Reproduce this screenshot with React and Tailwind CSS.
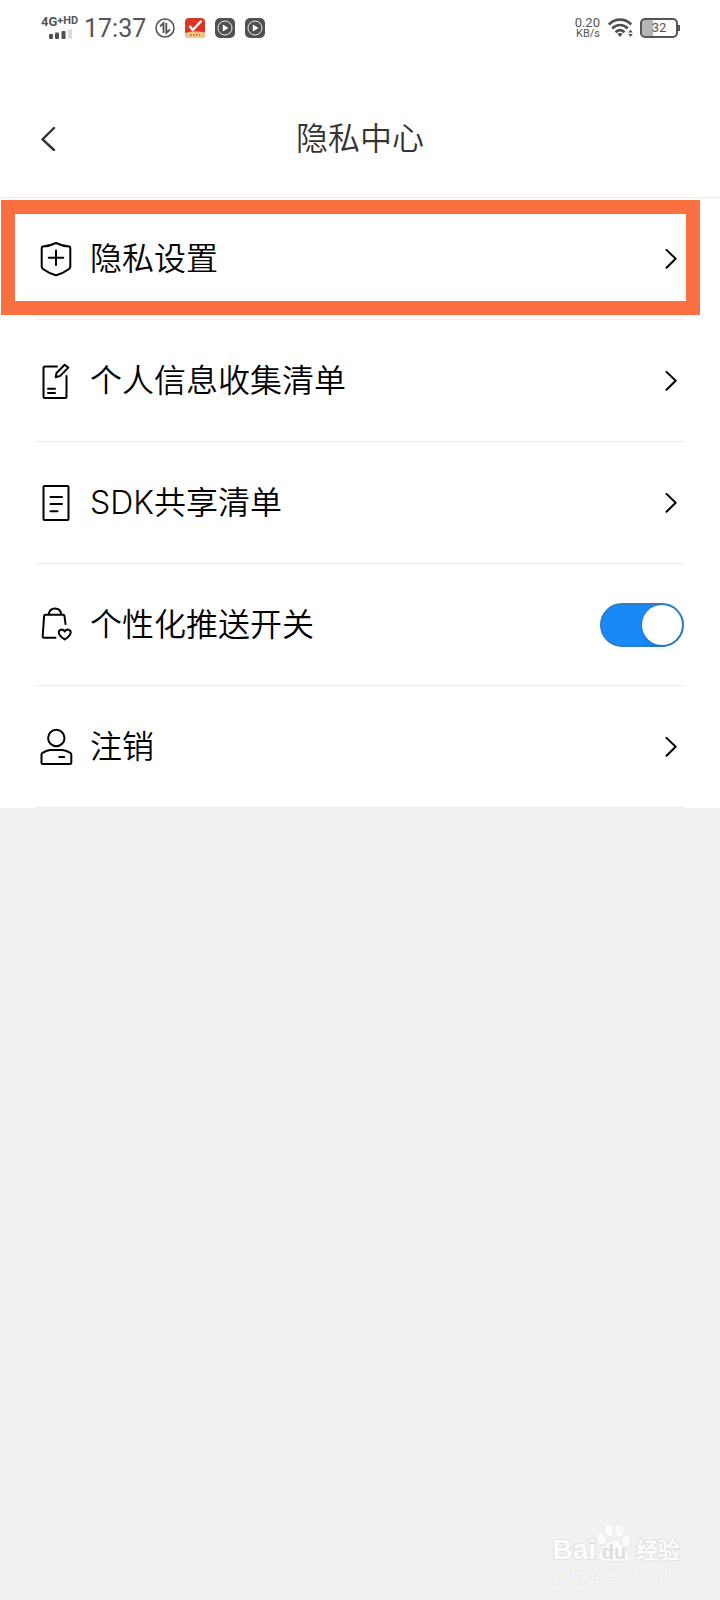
import { useState } from 'react';

const iconProps = {
    viewBox: '0 0 38 38',
    className: 'h-[38px] w-[38px] shrink-0',
    fill: 'none',
    stroke: 'currentColor',
    strokeWidth: 2,
    strokeLinecap: 'round',
    strokeLinejoin: 'round',
    'aria-hidden': true,
};

const ShieldIcon = () => (
    <svg {...iconProps}>
        <path d="M20 3 C15.500 5.200 11 6.300 6.800 6.600 Q5.700 6.700 5.700 8 V26.500 Q5.700 28 7 29 C11 32 15 34 20 35.300 C25 34 29 32 33 29 Q34.300 28 34.300 26.500 V8 Q34.300 6.700 33.200 6.600 C29 6.300 24.500 5.200 20 3 Z" />
        <path d="M12.700 17.700 H27.300 M20 10.500 V25" />
    </svg>
);

const EditIcon = () => (
    <svg {...iconProps}>
        <path d="M21 4.500 H9 Q7.500 4.500 7.500 6 V34.500 Q7.500 36 9 36 H29 Q30.500 36 30.500 34.500 V14" />
        <path d="M19.700 15.300 L20.500 11 L28.700 2.800 L32.300 5.600 L24.200 13.900 Z" />
        <path d="M12 26.700 H19 M12 31 H19" />
    </svg>
);

const ListIcon = () => (
    <svg {...iconProps}>
        <rect x="7.500" y="2" width="25" height="34" rx="1" />
        <path d="M14.500 13 H26 M14.500 20 H26 M14.500 27.200 H21.500" />
    </svg>
);

const BagIcon = () => (
    <svg {...iconProps}>
        <path d="M29.500 18 L28.500 10 Q28.300 8.700 27 8.700 H9.500 Q8.200 8.700 8.100 10 L6.700 30 Q6.700 31.700 8 31.700 H19.500" />
        <path d="M12.800 8 C14 0.800 24 0.800 25.200 8" />
        <path d="M28.700 33.500 C25.500 31.300 22.800 29 22.800 26.500 C22.800 23.400 26.800 22.500 28.700 25.400 C30.600 22.500 34.700 23.400 34.700 26.500 C34.700 29 32 31.300 28.700 33.500 Z" />
    </svg>
);

const UserIcon = () => (
    <svg {...iconProps}>
        <circle cx="20.300" cy="10" r="8.200" />
        <path d="M14 22 H26.500 C29 22.300 32 23.300 34.300 24.800 Q35.300 25.500 35.300 26.500 V34.500 Q35.300 36 33.800 36 H7 Q5.500 36 5.500 34.500 V26.500 Q5.500 25.500 6.500 24.800 C8.800 23.300 11.500 22.300 14 22 Z" />
        <path d="M23.200 29 H28.200" />
    </svg>
);

const Chevron = () => (
    <svg viewBox="0 0 12 20" className="mr-[7px] h-5 w-3 shrink-0" fill="none" stroke="currentColor" strokeWidth="2" strokeLinecap="round" strokeLinejoin="round" aria-hidden="true">
        <path d="M1.500 0.900 L10.700 9.800 L1.500 18.700" />
    </svg>
);

const PlayBadge = () => (
    <svg viewBox="0 0 20 20" className="h-5 w-5" aria-hidden="true">
        <rect width="20" height="20" rx="5" fill="#505050" />
        <circle cx="10" cy="10" r="7" fill="none" stroke="#eee" strokeWidth="1" />
        <path d="M7.800 6.500 L13.500 10 L7.800 13.500 Z" fill="#fff" />
    </svg>
);

const StatusBar = () => (
    <div className="flex h-14 items-center justify-between pr-10 pl-[41px] font-[Roboto,sans-serif] text-[#555]">
        <div className="flex items-center">
            <div className="flex w-10 flex-col items-start gap-0.5">
                <div className="flex items-start font-bold">
                    <span className="text-[13px] leading-[10px]">4G</span>
                    <span className="text-[11px] leading-2">+</span>
                    <span className="text-[11px] leading-2">HD</span>
                </div>
                <svg viewBox="0 0 24 10" className="ml-2 h-2.5 w-6" fill="#505050" aria-hidden="true">
                    <rect x="0" y="5" width="4" height="5" rx="1" />
                    <rect x="6" y="3.500" width="4" height="6.500" rx="1" />
                    <rect x="12.500" y="2" width="4" height="8" rx="1" />
                    <rect x="19" y="0" width="4" height="10" rx="1" fill="#ddd" />
                </svg>
            </div>
            <span className="ml-[3px] pt-0.5 text-[25px] leading-7">17:37</span>
            <div className="ml-[9px] flex gap-2.5">
                <svg viewBox="0 0 20 20" className="h-5 w-5" fill="none" stroke="#505050" strokeWidth="1.500" aria-hidden="true">
                    <circle cx="10" cy="10" r="9" />
                    <path d="M5 8.300 L8.500 5 V15 M11.300 5 V15 L15 11.500" strokeWidth="1.800" />
                </svg>
                <svg viewBox="0 0 20 20" className="h-5 w-5" aria-hidden="true">
                    <rect width="20" height="20" rx="4" fill="#dc3524" />
                    <path d="M0 15 Q10 12.500 20 14.500 V16 Q20 20 16 20 H4 Q0 20 0 16 Z" fill="#f7c48a" />
                    <path d="M4.500 8 L7.800 12 L16.500 2.800" fill="none" stroke="#fff" strokeWidth="2.400" />
                    <path d="M5 17 H15" stroke="#e2673c" strokeWidth="1.500" strokeDasharray="2 1" />
                </svg>
                <PlayBadge />
                <PlayBadge />
            </div>
        </div>
        <div className="flex items-center">
            <div className="flex flex-col items-end text-[11px] leading-[11px]">
                <span className="text-[13px]">0.20</span>
                <span>KB/s</span>
            </div>
            <svg viewBox="0 0 26 20" className="ml-2 h-5 w-[26px]" fill="none" stroke="#505050" strokeWidth="2.600" aria-hidden="true">
                <path d="M0.800 6.500 C7 0 17 0 23.200 6.500" />
                <path d="M4.200 10.500 C9 6 15 6 19.800 10.500" />
                <path d="M7.500 14.200 C10.500 11.500 13.500 11.500 16.500 14.200" />
                <path d="M9.300 15.700 Q12 14.200 14.700 15.700 L12 19 Z M20.300 14.500 L22.500 11.500 L24.700 14.500 Z M20.300 16 L22.500 19 L24.700 16 Z" fill="#505050" stroke="none" />
            </svg>
            <div className="ml-1.5 flex items-center">
                <div className="flex h-5 w-[38px] items-center justify-center rounded-[5px] border-2 border-[#555] bg-linear-to-r from-[#b5b5b5] from-33% to-white to-33% text-[13px] leading-4">
                    32
                </div>
                <span className="h-1.5 w-0.5 bg-[#555]" />
            </div>
        </div>
    </div>
);

const items = [
    { id: 'privacy', label: '隐私设置', Icon: ShieldIcon },
    { id: 'collect', label: '个人信息收集清单', Icon: EditIcon },
    { id: 'sdk', label: 'SDK共享清单', Icon: ListIcon },
    { id: 'push', label: '个性化推送开关', Icon: BagIcon, toggle: true },
    { id: 'cancel', label: '注销', Icon: UserIcon },
];

const Watermark = () => (
    <div className="absolute right-[38px] bottom-4 flex flex-col items-end text-[#fcfcfc] [-webkit-text-stroke:2px_#e2e2e2] [paint-order:stroke_fill]">
        <div className="flex items-end gap-1 pr-0.5">
            <span className="font-['Liberation_Sans',sans-serif] text-[28px] leading-7 font-bold">Bai</span>
            <div className="relative -ml-1 h-11 w-9">
                <svg viewBox="0 0 40 44" className="h-11 w-9" fill="#fbfbfb" stroke="#dedede" strokeWidth="1" aria-hidden="true">
                    <ellipse cx="6" cy="18" rx="5" ry="6.500" transform="rotate(-15 6 18)" />
                    <ellipse cx="14.500" cy="8.500" rx="5" ry="7" />
                    <ellipse cx="26" cy="9.500" rx="5" ry="7" />
                    <ellipse cx="33.500" cy="20.500" rx="5" ry="6.500" transform="rotate(15 33.500 20.500)" />
                    <path d="M20 20 C14 20 13 25 9 28.500 C5 32 3 34 3 37 C3 41 6 43.500 11 43 H30 C34 43.500 36.500 41 36 36.500 C35.500 33 32 31 30 28 C27 24 26 20 20 20 Z" />
                </svg>
                <span className="absolute inset-x-0 bottom-0.5 text-center font-['Liberation_Sans',sans-serif] text-xl leading-5 font-bold text-[#dedede] [-webkit-text-stroke:0px]">du</span>
            </div>
            <span className="text-[22px] leading-7 font-bold">经验</span>
        </div>
        <span className="font-['Open_Sans',sans-serif] text-[15px] leading-5 [-webkit-text-stroke:1px_#e4e4e4]">jingyan.baidu.com</span>
    </div>
);

export default function App() {
    const [push, setPush] = useState(true);

    return (
        <div className="relative min-h-screen bg-[#f1f1f1] font-[Inter,'Noto_Sans_CJK_SC',sans-serif] text-black">
            <div className="bg-white">
                <StatusBar />
                <header className="mt-6 flex h-[118px] items-center border-b border-[#ececec] px-9 text-[#333]">
                    <button type="button" aria-label="返回" className="flex w-10 items-center pl-1">
                        <svg viewBox="0 0 16 24" className="h-6 w-4" fill="none" stroke="currentColor" strokeWidth="2.400" strokeLinecap="round" strokeLinejoin="round" aria-hidden="true">
                            <path d="M14 1 L2.500 12.300 L14 23" />
                        </svg>
                    </button>
                    <h1 className="flex-1 text-center text-[32px] leading-10 font-[350]">隐私中心</h1>
                    <span className="w-10" />
                </header>

                <main className="relative">
                    <ul className="px-9">
                        {items.map(({ id, label, Icon, toggle }) => (
                            <li key={id} className="border-b border-[#ececec]">
                                {toggle ? (
                                    <label htmlFor={id} className="flex h-[121px] items-center gap-4">
                                        <Icon />
                                        <span className="flex-1 text-[32px] leading-10 font-[350]">{label}</span>
                                        <input
                                            id={id}
                                            type="checkbox"
                                            role="switch"
                                            checked={push}
                                            onChange={ev => setPush(ev.target.checked)}
                                            className="flex h-11 w-[84px] appearance-none items-center rounded-full border-2 border-[#c8c8c8] bg-[#ddd] before:h-10 before:w-10 before:rounded-full before:bg-white before:shadow-md checked:justify-end checked:border-[#2f7cc4] checked:bg-[#1989fa]"
                                        />
                                    </label>
                                ) : (
                                    <a href={`#${id}`} className="flex h-[121px] items-center gap-4">
                                        <Icon />
                                        <span className="flex-1 text-[32px] leading-10 font-[350]">{label}</span>
                                        <Chevron />
                                    </a>
                                )}
                            </li>
                        ))}
                    </ul>
                    {/* marker around the first row */}
                    <div className="pointer-events-none absolute top-0.5 right-5 left-px h-[115px] border-14 border-[#fb7041]" />
                </main>
            </div>
            <Watermark />
        </div>
    );
}
